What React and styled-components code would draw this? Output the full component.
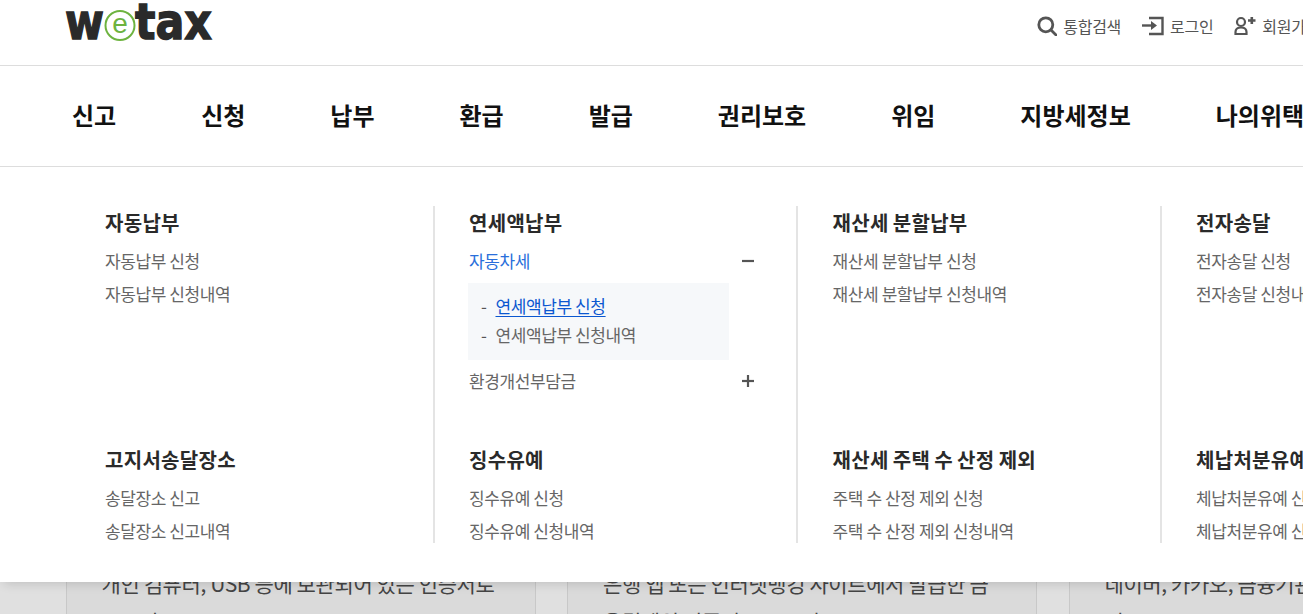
import React from 'react';
import styled, { createGlobalStyle } from 'styled-components';

const Global = createGlobalStyle`
html, body { margin:0; padding:0; background:#fff; }
body { width:1303px; height:614px; overflow:hidden; font-family:"Noto Sans CJK KR","Noto Sans",sans-serif; }
a { text-decoration:none; color:inherit; }
ul { list-style:none; margin:0; padding:0; }
`
const Page = styled.div`
width:1303px;
height:614px;
overflow:hidden;
`
const TopBar = styled.header`
height:65px;
border-bottom:1px solid #ddd;
display:flex;
justify-content:space-between;
padding-left:65px;
background:#fff;
`
const LogoSvg = styled.svg`
width:148px;
height:44px;
`
const Utils = styled.div`
display:flex;
gap:21px;
padding-top:14px;
margin-right:-17px;
height:24px;
`
const UtilLink = styled.a`
display:flex;
align-items:center;
gap:6px;
font-size:16px;
letter-spacing:-0.3px;
color:#555;
white-space:nowrap;
`
const MainNav = styled.nav`
height:100px;
border-bottom:1px solid #ddd;
display:flex;
align-items:center;
gap:85px;
padding-left:72px;
background:#fff;
`
const NavItem = styled.a`
font-size:24px;
line-height:30px;
margin-top:-3px;
font-weight:700;
color:#111;
white-space:nowrap;
`
const Panel = styled.section`
position:relative;
z-index:2;
height:415px;
background:#fff;
padding:39px 0 0 71px;
box-sizing:border-box;
box-shadow:0 6px 10px -4px rgba(0,0,0,.14);
`
const Grid = styled.div`
display:grid;
grid-template-columns:repeat(4,363.5px);
grid-template-rows:237px 100px;
`
const Col = styled.div`
padding-left:${p => p.$first ? '34px' : '34.5px'};
border-left:${p => p.$first ? '0' : '2px solid #e4e4e4'};
margin-left:${p => p.$first ? '0' : '-2px'};
overflow:hidden;
`
const Title = styled.h3`
margin:0 0 5px;
font-size:20px;
line-height:33px;
font-weight:700;
letter-spacing:0.3px;
word-spacing:-0.7px;
color:#2a2a2a;
white-space:nowrap;
`
const Item = styled.li`
width:286px;
height:33px;
display:flex;
align-items:center;
justify-content:space-between;
font-size:17px;
letter-spacing:-0.4px;
color:${p => p.$active ? '#2a6fdb' : '#666'};
white-space:nowrap;
`
const Toggle = styled.svg`
width:12px;
height:12px;
margin-right:1px;
`
const SubBox = styled.ul`
width:261px;
height:77px;
box-sizing:border-box;
margin:6px 0 4px -1px;
padding:8px 0 0 13px;
background:#f6f8fa;
`
const SubItem = styled.li`
height:29px;
display:flex;
align-items:center;
gap:9px;
font-size:17px;
letter-spacing:-0.4px;
color:#666;
white-space:nowrap;
&::before {
  content:'-';
  color:#555;
}
`
const SubLink = styled.a`
color:${p => p.$active ? '#0b57d0' : '#666'};
text-decoration:${p => p.$active ? 'underline' : 'none'};
text-underline-offset:3px;
`
const Backdrop = styled.section`
height:32px;
overflow:hidden;
background:#e0e0e0;
display:flex;
gap:31.5px;
padding-left:65.5px;
`
const Card = styled.div`
flex:0 0 470px;
height:120px;
box-sizing:border-box;
padding:0 35px;
margin-top:-19px;
background:#dadada;
border:1px solid #c8c8c8;
font-size:21px;
line-height:38px;
letter-spacing:-0.4px;
color:#444;
`

const columns = [
  { title: '자동납부', items: ['자동납부 신청', '자동납부 신청내역'] },
  { title: '연세액납부', custom: true },
  { title: '재산세 분할납부', items: ['재산세 분할납부 신청', '재산세 분할납부 신청내역'] },
  { title: '전자송달', items: ['전자송달 신청', '전자송달 신청내역'] },
  { title: '고지서송달장소', items: ['송달장소 신고', '송달장소 신고내역'] },
  { title: '징수유예', items: ['징수유예 신청', '징수유예 신청내역'] },
  { title: '재산세 주택 수 산정 제외', items: ['주택 수 산정 제외 신청', '주택 수 산정 제외 신청내역'] },
  { title: '체납처분유예', items: ['체납처분유예 신청', '체납처분유예 신청내역'] },
]

const navs = ['신고', '신청', '납부', '환급', '발급', '권리보호', '위임', '지방세정보', '나의위택스']

function Logo() {
  return (
    <LogoSvg viewBox="0 0 148 44">
      <text x="0" y="39" fontFamily="'DejaVu Sans'" fontWeight="700" fontSize="50" fill="#2a2a2a" stroke="#2a2a2a" strokeWidth="1.400" textLength="39" lengthAdjust="spacingAndGlyphs">w</text>
      <circle cx="55" cy="25.500" r="14.500" fill="none" stroke="#6db33f" strokeWidth="2" />
      <text x="55" y="33" textAnchor="middle" fontFamily="'Liberation Sans'" fontSize="28" fill="#6db33f">e</text>
      <text x="70" y="39" fontFamily="'DejaVu Sans'" fontWeight="700" fontSize="50" fill="#2a2a2a" stroke="#2a2a2a" strokeWidth="1.400" textLength="77" lengthAdjust="spacingAndGlyphs">tax</text>
    </LogoSvg>
  )
}

function SearchIcon() {
  return (
    <svg width="20" height="20" viewBox="0 0 20 20" fill="none" stroke="#555" strokeWidth="2.800">
      <circle cx="8.800" cy="8.800" r="7" />
      <path d="M14 14l5 5" strokeLinecap="round" />
    </svg>
  )
}

function LoginIcon() {
  return (
    <svg width="22" height="20" viewBox="0 0 22 20" fill="none" stroke="#555" strokeWidth="2.400">
      <path d="M7 2h13.500v16H7" />
      <path d="M0 9.500h9" />
      <path d="M9 5l6 4.500-6 4.500z" fill="#555" stroke="none" />
    </svg>
  )
}

function JoinIcon() {
  return (
    <svg width="22" height="20" viewBox="0 0 22 20" fill="none" stroke="#555" strokeWidth="2.200">
      <circle cx="7" cy="6" r="4" />
      <path d="M1.500 18v-2c0-3 2-4.500 5.500-4.500s5.500 1.500 5.500 4.500v2z" />
      <path d="M14 4.500h7.500M17.800 1v7" strokeWidth="2.600" />
    </svg>
  )
}

function ToggleIcon({ open }) {
  return (
    <Toggle viewBox="0 0 12 12" stroke="#555" strokeWidth="2.200">
      <path d="M0 6h12" />
      {!open && <path d="M6 0v12" />}
    </Toggle>
  )
}

export default function App() {
  return (
    <Page>
      <Global />
      <TopBar>
        <Logo />
        <Utils>
          <UtilLink><SearchIcon />통합검색</UtilLink>
          <UtilLink><LoginIcon />로그인</UtilLink>
          <UtilLink><JoinIcon />회원가입</UtilLink>
        </Utils>
      </TopBar>
      <MainNav>
        {navs.map(n => <NavItem key={n}>{n}</NavItem>)}
      </MainNav>
      <Panel>
        <Grid>
          {columns.map((c, i) => (
            <Col key={c.title} $first={i % 4 === 0}>
              <Title>{c.title}</Title>
              {c.custom ? (
                <ul>
                  <Item $active>자동차세<ToggleIcon open /></Item>
                  <SubBox>
                    <SubItem><SubLink $active>연세액납부 신청</SubLink></SubItem>
                    <SubItem><SubLink>연세액납부 신청내역</SubLink></SubItem>
                  </SubBox>
                  <Item>환경개선부담금<ToggleIcon /></Item>
                </ul>
              ) : (
                <ul>{c.items.map(t => <Item key={t}>{t}</Item>)}</ul>
              )}
            </Col>
          ))}
        </Grid>
      </Panel>
      <Backdrop>
        <Card>개인 컴퓨터, USB 등에 보관되어 있는 인증서로 로그인</Card>
        <Card>은행 앱 또는 인터넷뱅킹 사이트에서 발급한 금융결제원 인증서로 로그인</Card>
        <Card>네이버, 카카오, 금융기관 등 간편인증으로 로그인</Card>
      </Backdrop>
    </Page>
  )
}
